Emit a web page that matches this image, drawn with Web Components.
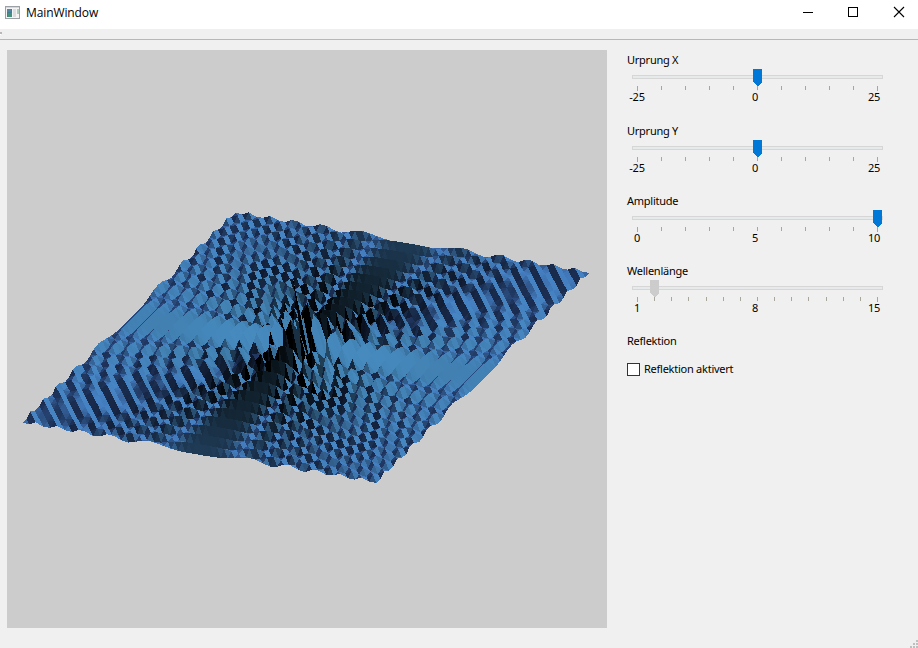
<!DOCTYPE html>
<html lang="de"><head><meta charset="utf-8"><title>MainWindow</title>
<style>html,body{margin:0;height:100%;overflow:hidden}</style></head>
<body>
<main-window></main-window>
<script>
const define=(name,html,init)=>customElements.define(name,class extends HTMLElement{
  constructor(){super();this.attachShadow({mode:'open'}).innerHTML=html;}
  connectedCallback(){if(init)init.call(this,this.shadowRoot);}
});

define('title-bar',`<style>
:host{display:flex;align-items:center;height:29px;background:#fff;font:12px "Open Sans",sans-serif;color:#000}
span{flex:1;padding:0 0 3px 6px;letter-spacing:-.1px;line-height:16px}
svg{display:block}.app{margin:-4px 0 0 5px}.ctl{margin-top:-5px}
</style>
<svg class="app" width="15" height="13" shape-rendering="crispEdges"><rect width="15" height="13" fill="#9aa0a6"/><rect x="1" y="1" width="13" height="1" fill="#d4d8dc"/><rect x="1" y="2" width="13" height="10" fill="#f4f4f4"/><rect x="2" y="3" width="5" height="8" fill="#3f7f94"/><rect x="2" y="3" width="4" height="3" fill="#5484a4"/><rect x="3" y="7" width="4" height="4" fill="#45907c"/><rect x="8" y="3" width="3" height="8" fill="#dcdcdf"/><rect x="12" y="3" width="2" height="5" fill="#a9cdb9"/></svg>
<span><slot></slot></span>
<svg class="ctl" width="115" height="12" fill="none" stroke="#000"><path d="M0 6.5h10M45.500 1.500h9v9h-9z" shape-rendering="crispEdges"/><path d="M91 1l10 10M101 1l-10 10" stroke-width="1.1"/></svg>`);

define('tool-strip',`<style>:host{display:block;box-sizing:border-box;height:11px;border-bottom:1px solid #b5b8b7;background:#f0f0f0;padding-top:3px}
i{display:block;width:2px;height:2px;background:#b8b8b8;box-shadow:-1px 1px #fff}</style><i></i>`);

define('value-slider',`<style>
:host{display:block;height:70px;width:257px}
.name{line-height:14px;height:14px}
svg{display:block;margin:2px 0 0 5px}
.scale{display:grid;grid-template-columns:20px 1fr 20px;line-height:12px;text-align:center;margin-top:-1px}
.scale span:nth-child(2){padding-right:1px}
</style><div class="name"><slot></slot></div><svg width="252" height="23" shape-rendering="crispEdges"></svg><div class="scale"><span></span><span></span><span></span></div>`,
function(root){
  const n=+this.getAttribute('steps'),pos=+this.getAttribute('pos'),off=this.hasAttribute('idle');
  let s='<rect x=".5" y="6.5" width="250" height="3" fill="#e7eaea" stroke="#d6d6d6"/>';
  for(let i=0;i<=n;i++){const x=5+Math.round(i*240/n);s+=`<rect x="${x}" y="17" width="1" height="${i%n?4:5}" fill="#a9a69c"/>`;}
  const x=5+Math.round(pos*240/n)-4;
  s+=`<path d="M${x} 0h9v13l-4 4h-1l-4-4z" fill="${off?'#ccc':'#0078d7'}"/>`;
  root.querySelector('svg').innerHTML=s;
  const t=this.getAttribute('marks').split(' ');
  root.querySelectorAll('.scale span').forEach((e,i)=>e.textContent=t[i]);
});

define('check-option',`<style>:host{display:flex;align-items:center;gap:4px;height:14px;line-height:14px}
i{box-sizing:border-box;width:13px;height:13px;border:1px solid #333;background:#fff}</style><i></i><span><slot></slot></span>`);

define('wave-view',`<style>:host{display:block;width:600px;height:578px;background:#ccc}canvas{display:block}</style><canvas width="600" height="578"></canvas>`,
function(root){
  const W=600,H=578,ctx=root.querySelector('canvas').getContext('2d');
  const img=ctx.createImageData(W,H),zb=new Float32Array(W*H).fill(-1e9);
  for(let i=0;i<W*H;i++){img.data.set([204,204,204,255],i*4);}
  const N=25,A=10,cx=298.5,cy=297;
  const U=[7.08,1.2],V=[-4.26,4.2],Z=[-1.3,-7.1],D=[.51,.695,.498];
  const norm=a=>{const l=Math.hypot(...a);return a.map(v=>v/l)};
  const dot=(a,b)=>a[0]*b[0]+a[1]*b[1]+a[2]*b[2];
  const L=norm([.92,.05,.38]),L2=norm([-.6,-.5,.6]),Hf=norm(L.map((v,i)=>v+D[i]));
  const f=(x,y)=>{const r=Math.hypot(x,y);return A*Math.cos(Math.PI*r)/Math.max(1,r);};
  const pt=(x,y)=>{const z=f(x,y);return{w:[x,y,z],x:cx+x*U[0]+y*V[0]+z*Z[0],y:cy+x*U[1]+y*V[1]+z*Z[1],d:dot([x,y,z],D)}};
  function tri(a,b,c){
    const p=b.w.map((v,i)=>v-a.w[i]),q=c.w.map((v,i)=>v-a.w[i]);
    let n=norm([p[1]*q[2]-p[2]*q[1],p[2]*q[0]-p[0]*q[2],p[0]*q[1]-p[1]*q[0]]);
    if(n[2]<0)n=n.map(v=>-v);
    let col=[0,0,0];
    if(dot(n,D)>0){
      const d=Math.max(0,dot(n,L)),e=Math.max(0,dot(n,L2)),s=Math.pow(Math.max(0,dot(n,Hf)),40)*0;
      col=[70*d+50*e+90*s,138*d+85*e+90*s,190*d+150*e+90*s];
    }
    const ar=(b.x-a.x)*(c.y-a.y)-(b.y-a.y)*(c.x-a.x);if(!ar)return;
    const x0=Math.max(0,Math.floor(Math.min(a.x,b.x,c.x))),x1=Math.min(W-1,Math.ceil(Math.max(a.x,b.x,c.x)));
    const y0=Math.max(0,Math.floor(Math.min(a.y,b.y,c.y))),y1=Math.min(H-1,Math.ceil(Math.max(a.y,b.y,c.y)));
    for(let y=y0;y<=y1;y++)for(let x=x0;x<=x1;x++){
      const X=x+.5,Y=y+.5;
      const u=((X-a.x)*(c.y-a.y)-(Y-a.y)*(c.x-a.x))/ar,v=((b.x-a.x)*(Y-a.y)-(b.y-a.y)*(X-a.x))/ar;
      if(u<0||v<0||u+v>1)continue;
      const d=a.d+u*(b.d-a.d)+v*(c.d-a.d),k=y*W+x;
      if(d>zb[k]){zb[k]=d;for(let j=0;j<3;j++)img.data[k*4+j]=col[j];}
    }
  }
  for(let y=-N;y<N;y++)for(let x=-N;x<N;x++){
    const a=pt(x,y),b=pt(x+1,y),c=pt(x+1,y+1),d=pt(x,y+1);
    tri(a,b,c);tri(a,c,d);
  }
  ctx.putImageData(img,0,0);
});

define('size-grip',`<style>:host{display:block;width:8px;height:8px}svg{display:block}</style><svg width="8" height="8" fill="#bfbfbf" shape-rendering="crispEdges"><path d="M6 0h2v2h-2zM3 3h2v2h-2zM6 3h2v2h-2zM0 6h2v2h-2zM3 6h2v2h-2zM6 6h2v2h-2z"/></svg>`);

define('main-window',`<style>
:host{display:flex;flex-direction:column;width:918px;height:648px;background:#f0f0f0;overflow:hidden;color:#000}
.body{display:flex;gap:20px;padding:10px 0 0 7px;flex:1}
.panel{font:11px "Noto Sans",sans-serif;letter-spacing:-.25px;padding-top:3px}
.first{height:71px}.group{line-height:14px;margin-bottom:14px}
size-grip{align-self:flex-end;margin-bottom:0}
</style>
<title-bar>MainWindow</title-bar><tool-strip></tool-strip>
<div class="body"><wave-view></wave-view>
<div class="panel">
<value-slider class="first" steps="10" pos="5" marks="-25 0 25">Urprung X</value-slider>
<value-slider steps="10" pos="5" marks="-25 0 25">Urprung Y</value-slider>
<value-slider steps="10" pos="10" marks="0 5 10">Amplitude</value-slider>
<value-slider steps="14" pos="1" idle marks="1 8 15">Wellenlänge</value-slider>
<div class="group">Reflektion</div>
<check-option>Reflektion aktivert</check-option>
</div></div><size-grip></size-grip>`);
</script>
</body></html>
